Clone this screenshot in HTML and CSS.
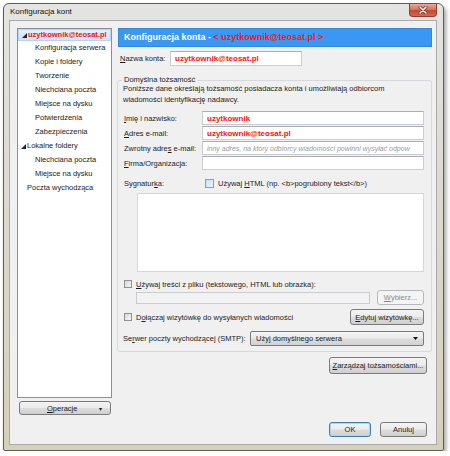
FILE: index.html
```html
<!DOCTYPE html>
<html lang="pl">
<head>
<meta charset="utf-8">
<title>Konfiguracja kont</title>
<link rel="stylesheet" href="styles.css">
</head>
<body>
<div class="window">
  <div class="titlebar">
    <span class="title">Konfiguracja kont</span>
    <span class="close"><svg width="10" height="8" viewBox="0 0 10 8"><path d="M2 1L8 7M8 1L2 7" stroke="#6b2a20" stroke-width="3" stroke-linecap="round"/><path d="M2 1L8 7M8 1L2 7" stroke="#fff" stroke-width="1.6" stroke-linecap="round"/></svg></span>
  </div>
  <div class="client">
    <div class="main">
      <div class="leftcol">
        <div class="tree">
          <div class="node sel"><svg class="tw" width="5" height="5" viewBox="0 0 5 5"><path d="M5 0V5H0Z" fill="#262626"/></svg><span class="acct">uzytkownik@teosat.pl</span></div>
          <div class="node child">Konfiguracja serwera</div>
          <div class="node child">Kopie i foldery</div>
          <div class="node child">Tworzenie</div>
          <div class="node child">Niechciana poczta</div>
          <div class="node child">Miejsce na dysku</div>
          <div class="node child">Potwierdzenia</div>
          <div class="node child">Zabezpieczenia</div>
          <div class="node"><svg class="tw" width="5" height="5" viewBox="0 0 5 5"><path d="M5 0V5H0Z" fill="#262626"/></svg>Lokalne foldery</div>
          <div class="node child">Niechciana poczta</div>
          <div class="node child">Miejsce na dysku</div>
          <div class="node top">Poczta wychodząca</div>
        </div>
        <button class="btn ops"><span class="opslabel"><u>O</u>peracje</span><span class="dd">▾</span></button>
      </div>
      <div class="rightcol">
        <div class="header">Konfiguracja konta - <span class="hred">&lt; uzytkownik@teosat.pl &gt;</span></div>
        <div class="namerow">
          <span class="namelabel"><u>N</u>azwa konta:</span>
          <div class="input nameinput"><span class="val">uzytkownik@teosat.pl</span></div>
        </div>
        <fieldset class="group">
          <legend>Domyślna tożsamość</legend>
          <p class="desc">Poniższe dane określają tożsamość posiadacza konta i umożliwiają odbiorcom<br>wiadomości identyfikację nadawcy.</p>
          <div class="frows">
            <div class="frow"><span class="flabel"><u>I</u>mię i nazwisko:</span><div class="input"><span class="val">uzytkownik</span></div></div>
            <div class="frow"><span class="flabel"><u>A</u>dres e-mail:</span><div class="input"><span class="val">uzytkownik@teosat.pl</span></div></div>
            <div class="frow"><span class="flabel">Zwrotny adre<u>s</u> e-mail:</span><div class="input"><span class="ph">inny adres, na który odbiorcy wiadomości powinni wysyłać odpow</span></div></div>
            <div class="frow"><span class="flabel"><u>F</u>irma/Organizacja:</span><div class="input"></div></div>
          </div>
          <div class="sigrow">
            <span class="siglabel">Sygnatur<u>k</u>a:</span>
            <span class="cb cb-blue"></span>
            <span class="cbtext">Używaj <u>H</u>TML (np. &lt;b&gt;pogrubiony tekst&lt;/b&gt;)</span>
          </div>
          <div class="textarea"></div>
          <div class="checkrow filecheck">
            <span class="cb"></span>
            <span class="cbtext"><u>U</u>żywaj treści z pliku (tekstowego, HTML lub obrazka):</span>
          </div>
          <div class="filerow">
            <div class="fileinput"></div>
            <button class="btn btn-disabled wybierz"><span><u>W</u>ybierz...</span></button>
          </div>
          <div class="checkrow vcard">
            <span class="cb"></span>
            <span class="cbtext">D<u>o</u>łączaj wizytówkę do wysyłanych wiadomości</span>
            <button class="btn edytuj"><span><u>E</u>dytuj wizytówkę...</span></button>
          </div>
          <div class="smtprow">
            <span class="smtplabel">Se<u>r</u>wer poczty wychodzącej (SMTP):</span>
            <div class="select"><span>Użyj domyślnego serwera</span><span class="arrow"><svg width="5" height="3" viewBox="0 0 5 3"><path d="M0 0H5L2.5 3Z" fill="#111"/></svg></span></div>
          </div>
        </fieldset>
        <button class="btn manage"><span><u>Z</u>arządzaj tożsamościami...</span></button>
      </div>
    </div>
    <div class="footer">
      <button class="btn btn-default ok"><span>OK</span></button>
      <button class="btn cancel"><span>Anuluj</span></button>
    </div>
  </div>
</div>
</body>
</html>
```
FILE: styles.css
```css
html, body {
  margin: 0;
  padding: 0;
  background: #ffffff;
}
body {
  font-family: "Liberation Sans", Arial, sans-serif;
  font-size: 7.5px;
  color: #1b1b1b;
}
u { text-decoration: underline; text-underline-offset: 1px; }

.window {
  margin: 3px 0 0 3px;
  width: 439px;
  height: 446px;
  border: 1px solid #5c5c5c;
  border-radius: 6px 6px 2px 2px;
  background: linear-gradient(180deg, #e4e4e2 0%, #dcdad2 40%, #d6d0b8 100%);
  box-shadow: 2px 3px 4px rgba(0, 0, 0, 0.38);
  display: flex;
  flex-direction: column;
}

.titlebar {
  height: 16px;
  display: flex;
  justify-content: space-between;
  align-items: flex-start;
  padding: 0 6px 0 6px;
}
.title {
  font-size: 8px;
  line-height: 16px;
  color: #111;
}
.close {
  width: 28px;
  height: 13px;
  box-sizing: border-box;
  border: 1px solid #8e3d2e;
  border-top: none;
  border-radius: 0 0 4px 4px;
  background: linear-gradient(180deg, #e9a899 0%, #d9735f 45%, #c44a33 55%, #d26a4e 100%);
  display: flex;
  align-items: center;
  justify-content: center;
}

.client {
  margin: 0 6px 0 5px;
  height: 425px;
  box-sizing: border-box;
  border: 1px solid #aaaaaa;
  background: #f0f0f0;
  padding: 7px 4px 7px 7px;
  display: flex;
  flex-direction: column;
}

.main {
  display: flex;
  gap: 6px;
  height: 387px;
}

.leftcol {
  width: 95px;
  display: flex;
  flex-direction: column;
  gap: 3px;
}
.tree {
  height: 370px;
  box-sizing: border-box;
  border: 1px solid #8b8f96;
  background: #ffffff;
}
.node {
  height: 14px;
  line-height: 14px;
  padding-left: 9px;
  white-space: nowrap;
  display: flex;
  align-items: center;
  color: #1b1b1b;
}
.node.child { padding-left: 17px; }
.node .tw { margin-left: -6px; margin-right: 1px; }
.node.sel {
  height: 12px;
  box-sizing: border-box;
  border: 1px solid #b6d3f3;
  background: linear-gradient(180deg, #e3effd 0%, #cfe3fb 100%);
  padding-left: 9px;
}
.acct {
  color: #ee1111;
  font-weight: bold;
}

.btn {
  box-sizing: border-box;
  border: 1px solid #7a7a7a;
  border-radius: 3px;
  background: linear-gradient(180deg, #f3f3f3 0%, #ebebeb 48%, #dddddd 52%, #cfcfcf 100%);
  font-family: inherit;
  font-size: 7.5px;
  color: #1b1b1b;
  padding: 0;
  margin: 0;
  display: flex;
  align-items: center;
  justify-content: center;
  white-space: nowrap;
}
.btn-default {
  border-color: #3c7fb1;
  box-shadow: inset 0 0 0 1px #a8d8f5;
}
.btn-disabled {
  border-color: #b5b9bc;
  background: #f4f4f4;
  color: #8a8a8a;
}

.ops {
  margin-left: 2px;
  width: 92px;
  height: 14px;
  position: relative;
  justify-content: flex-start;
}
.opslabel { margin-left: 27px; }
.dd {
  margin-left: auto;
  margin-right: 8px;
  font-size: 6px;
}

.rightcol {
  width: 314px;
  display: flex;
  flex-direction: column;
}
.header {
  height: 19px;
  box-sizing: border-box;
  background: #3a98f2;
  border: 1px solid #3189de;
  color: #ffffff;
  font-weight: bold;
  font-size: 9px;
  line-height: 17px;
  padding-left: 5px;
  white-space: nowrap;
}
.hred { color: #ff1212; }

.namerow {
  margin-top: 4px;
  height: 15px;
  display: flex;
  align-items: center;
}
.namelabel {
  width: 50px;
  padding-left: 2px;
  white-space: nowrap;
}
.input {
  box-sizing: border-box;
  height: 14px;
  background: #ffffff;
  border: 1px solid #c9ccd1;
  border-top-color: #abadb3;
  display: flex;
  align-items: center;
  padding-left: 4px;
  overflow: hidden;
  white-space: nowrap;
}
.nameinput {
  width: 132px;
  height: 15px;
}
.val {
  color: #ff1010;
  font-weight: bold;
  font-size: 8px;
}
.ph {
  color: #9a9a9a;
  font-style: italic;
  font-size: 7px;
}

.group {
  margin: 10px 0 0 -1px;
  padding: 0 7px 5px 0;
  border: 1px solid #d5d8dc;
  border-radius: 3px;
  min-width: 0;
}
.group legend {
  margin-left: 4px;
  padding: 0 2px;
  line-height: 8px;
  font-size: 7.5px;
}
.desc {
  margin: -1px 0 0 5px;
  line-height: 11px;
  white-space: nowrap;
}
.frows {
  margin-top: 6px;
  display: flex;
  flex-direction: column;
  gap: 1px;
}
.frow {
  height: 14px;
  display: flex;
  align-items: center;
}
.flabel {
  width: 78px;
  margin-left: 6px;
  flex: none;
  white-space: nowrap;
}
.frow .input { flex: 1; }

.sigrow {
  margin-top: 6px;
  height: 14px;
  display: flex;
  align-items: center;
}
.siglabel {
  width: 81px;
  margin-left: 6px;
  flex: none;
}
.cb {
  width: 8px;
  height: 8px;
  box-sizing: border-box;
  border: 1px solid #8e8f8f;
  background: linear-gradient(135deg, #d8d8d8 0%, #f6f6f6 100%);
  flex: none;
}
.cb-blue {
  width: 9px;
  height: 9px;
  border-color: #6fa6d3;
  background: linear-gradient(135deg, #c7e1f7 0%, #e9f4fd 100%);
}
.cbtext {
  margin-left: 4px;
  white-space: nowrap;
}
.textarea {
  margin: 3px 0 0 19px;
  height: 79px;
  box-sizing: border-box;
  background: #ffffff;
  border: 1px solid #d3d6da;
}

.checkrow {
  display: flex;
  align-items: center;
  padding-left: 6px;
}
.filecheck {
  margin-top: 6px;
  height: 12px;
}
.filecheck .cbtext { margin-left: 4px; }
.filerow {
  height: 15px;
  display: flex;
  align-items: center;
}
.fileinput {
  margin-left: 18px;
  width: 234px;
  height: 12px;
  box-sizing: border-box;
  border: 1px solid #c9ccd0;
  background: #f2f2f2;
}
.wybierz {
  margin-left: 7px;
  width: 47px;
  height: 15px;
}
.vcard {
  margin-top: 4px;
  height: 16px;
}
.edytuj {
  margin-left: auto;
  width: 74px;
  height: 16px;
}

.smtprow {
  margin-top: 6px;
  height: 15px;
  display: flex;
  align-items: center;
}
.smtplabel {
  width: 127px;
  margin-left: 5px;
  flex: none;
  white-space: nowrap;
}
.select {
  flex: 1;
  height: 15px;
  box-sizing: border-box;
  border: 1px solid #7a7a7a;
  border-radius: 2px;
  background: linear-gradient(180deg, #f3f3f3 0%, #ebebeb 48%, #dddddd 52%, #d2d2d2 100%);
  display: flex;
  align-items: center;
  padding-left: 5px;
  white-space: nowrap;
}
.arrow {
  margin-left: auto;
  margin-right: 5px;
  display: flex;
}

.manage {
  margin-top: 5px;
  margin-right: 5px;
  align-self: flex-end;
  width: 98px;
  height: 17px;
}

.footer {
  margin-top: 7px;
  display: flex;
  justify-content: flex-end;
  gap: 9px;
  padding-right: 5px;
}
.ok { width: 42px; height: 15px; }
.cancel { width: 47px; height: 15px; }
```
